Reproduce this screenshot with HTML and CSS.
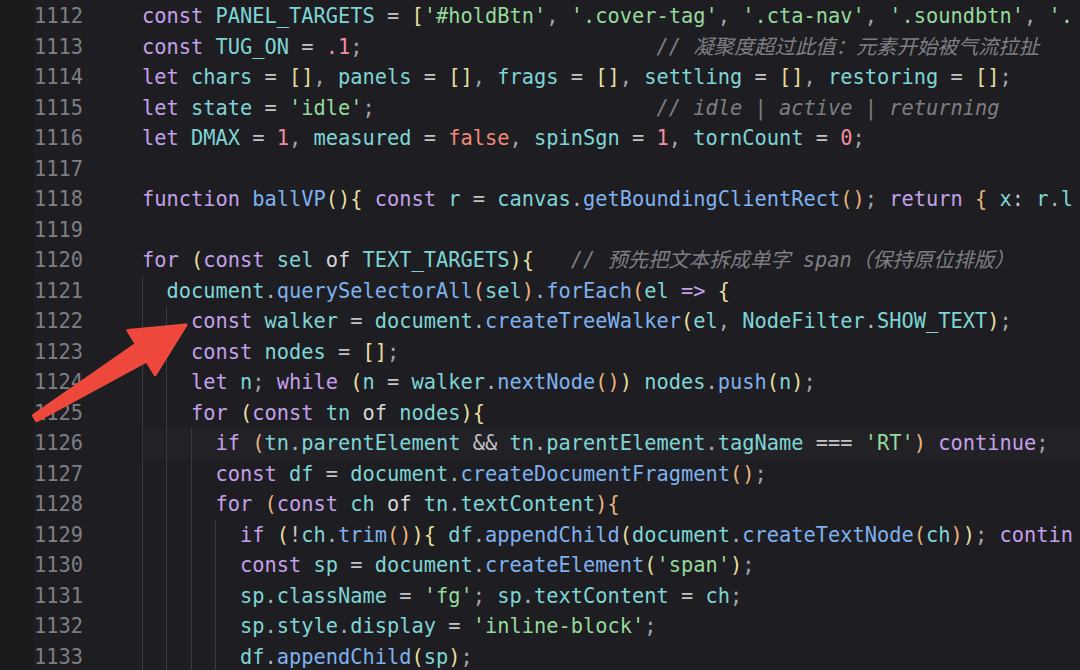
FILE: index.html
```html
<!DOCTYPE html>
<html lang="zh">
<head>
<meta charset="utf-8">
<title>editor</title>
<link rel="stylesheet" href="styles.css">
</head>
<body>
<div class="editor">
  <div class="strip"></div>
  <div class="gutter">
    <div class="num">1112</div>
    <div class="num">1113</div>
    <div class="num">1114</div>
    <div class="num">1115</div>
    <div class="num">1116</div>
    <div class="num">1117</div>
    <div class="num">1118</div>
    <div class="num">1119</div>
    <div class="num">1120</div>
    <div class="num">1121</div>
    <div class="num">1122</div>
    <div class="num">1123</div>
    <div class="num">1124</div>
    <div class="num">1125</div>
    <div class="num">1126</div>
    <div class="num">1127</div>
    <div class="num">1128</div>
    <div class="num">1129</div>
    <div class="num">1130</div>
    <div class="num">1131</div>
    <div class="num">1132</div>
    <div class="num">1133</div>
  </div>
  <div class="code">
    <div class="line"><span class="k">const</span> <span class="v">PANEL_TARGETS</span> <span class="o">=</span> <span class="y">[</span><span class="s">'#holdBtn'</span><span class="p">,</span> <span class="s">'.cover-tag'</span><span class="p">,</span> <span class="s">'.cta-nav'</span><span class="p">,</span> <span class="s">'.soundbtn'</span><span class="p">,</span> <span class="s">'.</span></div>
    <div class="line"><span class="k">const</span> <span class="v">TUG_ON</span> <span class="o">=</span> <span class="n">.1</span><span class="p">;</span>                        <span class="c">// 凝聚度超过此值：元素开始被气流拉扯</span></div>
    <div class="line"><span class="k">let</span> <span class="v">chars</span> <span class="o">=</span> <span class="y">[]</span><span class="p">,</span> <span class="v">panels</span> <span class="o">=</span> <span class="y">[]</span><span class="p">,</span> <span class="v">frags</span> <span class="o">=</span> <span class="y">[]</span><span class="p">,</span> <span class="v">settling</span> <span class="o">=</span> <span class="y">[]</span><span class="p">,</span> <span class="v">restoring</span> <span class="o">=</span> <span class="y">[]</span><span class="p">;</span></div>
    <div class="line"><span class="k">let</span> <span class="v">state</span> <span class="o">=</span> <span class="s">'idle'</span><span class="p">;</span>                       <span class="c">// idle | active | returning</span></div>
    <div class="line"><span class="k">let</span> <span class="v">DMAX</span> <span class="o">=</span> <span class="n">1</span><span class="p">,</span> <span class="v">measured</span> <span class="o">=</span> <span class="b">false</span><span class="p">,</span> <span class="v">spinSgn</span> <span class="o">=</span> <span class="n">1</span><span class="p">,</span> <span class="v">tornCount</span> <span class="o">=</span> <span class="n">0</span><span class="p">;</span></div>
    <div class="line"></div>
    <div class="line"><span class="k">function</span> <span class="f">ballVP</span><span class="y">(){</span> <span class="k">const</span> <span class="v">r</span> <span class="o">=</span> <span class="v">canvas</span><span class="d">.</span><span class="f">getBoundingClientRect</span><span class="r">()</span><span class="p">;</span> <span class="k">return</span> <span class="r">{</span> <span class="v">x</span><span class="o">:</span> <span class="v">r</span><span class="d">.</span><span class="v">l</span></div>
    <div class="line"></div>
    <div class="line"><span class="k">for</span> <span class="y">(</span><span class="k">const</span> <span class="v">sel</span> <span class="t">of</span> <span class="v">TEXT_TARGETS</span><span class="y">){</span>   <span class="c">// 预先把文本拆成单字 span（保持原位排版）</span></div>
    <div class="line"><span class="g"></span><span class="v">document</span><span class="d">.</span><span class="f">querySelectorAll</span><span class="r">(</span><span class="v">sel</span><span class="r">)</span><span class="d">.</span><span class="f">forEach</span><span class="r">(</span><span class="v">el</span> <span class="k">=&gt;</span> <span class="y">{</span></div>
    <div class="line"><span class="g"></span><span class="g"></span><span class="k">const</span> <span class="v">walker</span> <span class="o">=</span> <span class="v">document</span><span class="d">.</span><span class="f">createTreeWalker</span><span class="y">(</span><span class="v">el</span><span class="p">,</span> <span class="v">NodeFilter</span><span class="d">.</span><span class="v">SHOW_TEXT</span><span class="y">)</span><span class="p">;</span></div>
    <div class="line"><span class="g"></span><span class="g"></span><span class="k">const</span> <span class="v">nodes</span> <span class="o">=</span> <span class="y">[]</span><span class="p">;</span></div>
    <div class="line"><span class="g"></span><span class="g"></span><span class="k">let</span> <span class="v">n</span><span class="p">;</span> <span class="k">while</span> <span class="y">(</span><span class="v">n</span> <span class="o">=</span> <span class="v">walker</span><span class="d">.</span><span class="f">nextNode</span><span class="r">()</span><span class="y">)</span> <span class="v">nodes</span><span class="d">.</span><span class="f">push</span><span class="y">(</span><span class="v">n</span><span class="y">)</span><span class="p">;</span></div>
    <div class="line"><span class="g"></span><span class="g"></span><span class="k">for</span> <span class="y">(</span><span class="k">const</span> <span class="v">tn</span> <span class="t">of</span> <span class="v">nodes</span><span class="y">){</span></div>
    <div class="line cur"><span class="g"></span><span class="g"></span><span class="g"></span><span class="k">if</span> <span class="r">(</span><span class="v">tn</span><span class="d">.</span><span class="v">parentElement</span> <span class="o">&amp;&amp;</span> <span class="v">tn</span><span class="d">.</span><span class="v">parentElement</span><span class="d">.</span><span class="v">tagName</span> <span class="o">===</span> <span class="s">'RT'</span><span class="r">)</span> <span class="k">continue</span><span class="p">;</span></div>
    <div class="line"><span class="g"></span><span class="g"></span><span class="g"></span><span class="k">const</span> <span class="v">df</span> <span class="o">=</span> <span class="v">document</span><span class="d">.</span><span class="f">createDocumentFragment</span><span class="r">()</span><span class="p">;</span></div>
    <div class="line"><span class="g"></span><span class="g"></span><span class="g"></span><span class="k">for</span> <span class="r">(</span><span class="k">const</span> <span class="v">ch</span> <span class="t">of</span> <span class="v">tn</span><span class="d">.</span><span class="v">textContent</span><span class="r">){</span></div>
    <div class="line"><span class="g"></span><span class="g"></span><span class="g"></span><span class="g"></span><span class="k">if</span> <span class="y">(</span><span class="o">!</span><span class="v">ch</span><span class="d">.</span><span class="f">trim</span><span class="r">()</span><span class="y">){</span> <span class="v">df</span><span class="d">.</span><span class="f">appendChild</span><span class="y">(</span><span class="v">document</span><span class="d">.</span><span class="f">createTextNode</span><span class="r">(</span><span class="v">ch</span><span class="r">)</span><span class="y">)</span><span class="p">;</span> <span class="k">contin</span></div>
    <div class="line"><span class="g"></span><span class="g"></span><span class="g"></span><span class="g"></span><span class="k">const</span> <span class="v">sp</span> <span class="o">=</span> <span class="v">document</span><span class="d">.</span><span class="f">createElement</span><span class="y">(</span><span class="s">'span'</span><span class="y">)</span><span class="p">;</span></div>
    <div class="line"><span class="g"></span><span class="g"></span><span class="g"></span><span class="g"></span><span class="v">sp</span><span class="d">.</span><span class="v">className</span> <span class="o">=</span> <span class="s">'fg'</span><span class="p">;</span> <span class="v">sp</span><span class="d">.</span><span class="v">textContent</span> <span class="o">=</span> <span class="v">ch</span><span class="p">;</span></div>
    <div class="line"><span class="g"></span><span class="g"></span><span class="g"></span><span class="g"></span><span class="v">sp</span><span class="d">.</span><span class="v">style</span><span class="d">.</span><span class="v">display</span> <span class="o">=</span> <span class="s">'inline-block'</span><span class="p">;</span></div>
    <div class="line"><span class="g"></span><span class="g"></span><span class="g"></span><span class="g"></span><span class="v">df</span><span class="d">.</span><span class="f">appendChild</span><span class="y">(</span><span class="v">sp</span><span class="y">)</span><span class="p">;</span></div>
  </div>
  <svg class="arrow" width="1080" height="670" viewBox="0 0 1080 670" aria-hidden="true">
    <polygon points="33.4,415.4 136.3,344 127.9,330.4 186,325 155.1,374.6 146.7,361 36.6,420.6" fill="#ee483c" stroke="#ee483c" stroke-width="3" stroke-linejoin="round"/>
  </svg>
</div>
</body>
</html>
```

FILE: styles.css
```css
html, body {
  margin: 0;
  padding: 0;
}

body {
  background: #1e1e22;
  width: 1080px;
  height: 670px;
  overflow: hidden;
  font-family: "DejaVu Sans Mono", "Noto Sans CJK SC", monospace;
  font-size: 20.35px;
  line-height: 30.5px;
}

.editor {
  position: relative;
  display: flex;
  height: 670px;
  overflow: hidden;
}

.strip {
  width: 33px;
  flex: none;
  background: #19191c;
}

.gutter {
  width: 50px;
  flex: none;
  padding-top: 1px;
  text-align: right;
  color: #7e7e82;
}

.num {
  height: 30.5px;
}

.code {
  flex: 1;
  min-width: 0;
  padding-top: 1px;
  padding-left: 59px;
  color: #d4d4d4;
}

.line {
  height: 30.5px;
  white-space: pre;
  overflow: hidden;
}

.line.cur {
  background: rgba(255, 255, 255, 0.018);
}

.g {
  display: inline-block;
  width: 2ch;
  height: 30.5px;
  vertical-align: top;
  box-shadow: inset 1px 0 0 #38383d;
}

.k { color: #c4a0ea; }
.v { color: #7fd5d6; }
.f { color: #7fb1ee; }
.s { color: #95da9c; }
.n { color: #f18da1; }
.b { color: #f2867b; }
.o { color: #c4c4c6; }
.p { color: #a4a4a8; }
.d { color: #a8b4bc; }
.t { color: #d6d6d8; }
.y { color: #e6df9d; }
.r { color: #e8b37c; }
.c {
  color: #7e7e82;
  font-style: italic;
}

.arrow {
  position: absolute;
  left: 0;
  top: 0;
  pointer-events: none;
}
```
